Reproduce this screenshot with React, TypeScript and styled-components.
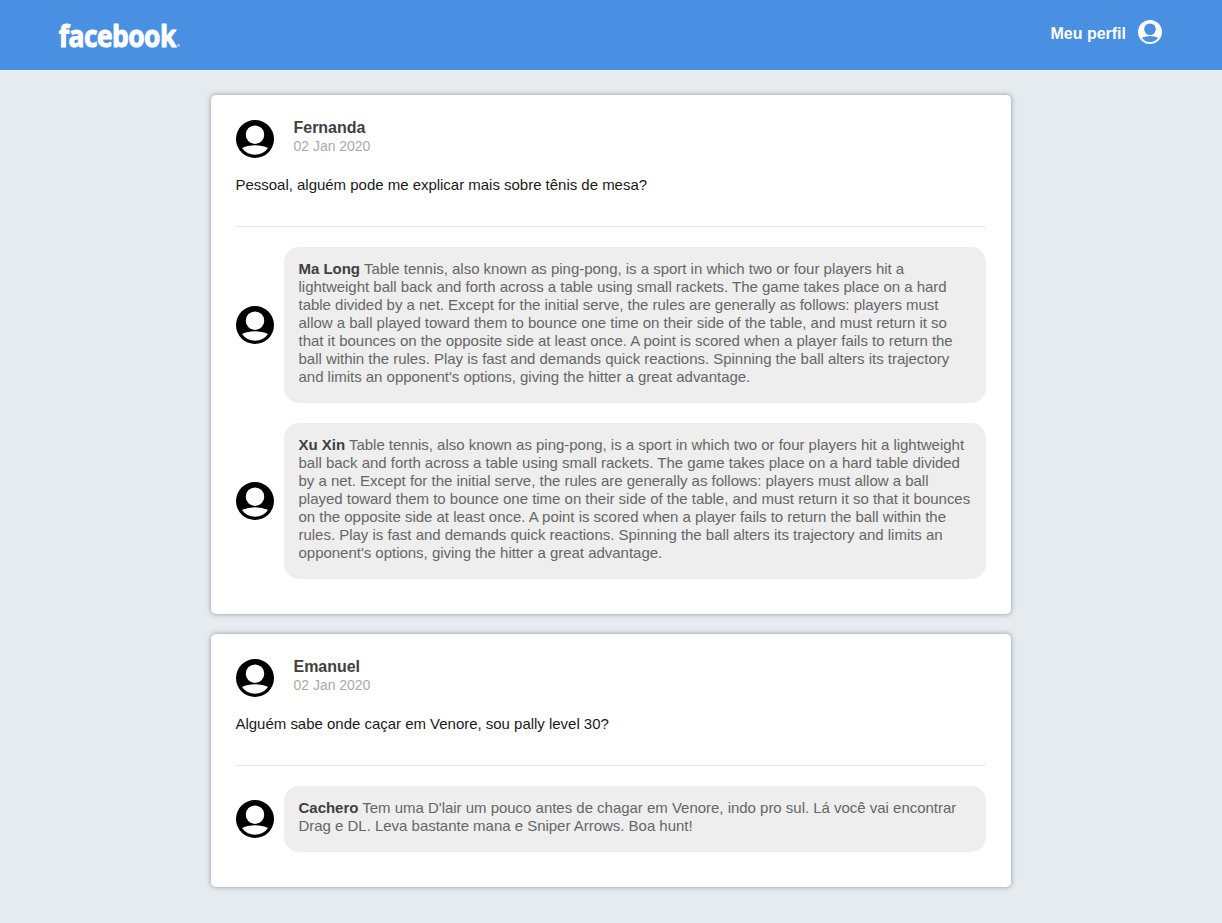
import React from "react";
import styled, { createGlobalStyle } from "styled-components";

const GlobalStyle = createGlobalStyle`
  * {
    margin: 0;
    padding: 0;
    box-sizing: border-box;
  }
  body {
    background: #e5ebef;
    font-family: "Liberation Sans", Helvetica, Arial, sans-serif;
    font-size: 15px;
    letter-spacing: -0.02px;
    -webkit-font-smoothing: antialiased;
  }
`;

const Header = styled.header`
  display: flex;
  align-items: flex-start;
  justify-content: space-between;
  height: 70px;
  padding: 20px 60px 0 55px;
  background: #4a90e2;
`;

const Logo = styled.svg`
  display: block;
  width: 130px;
  height: 32px;
  overflow: visible;
  letter-spacing: -0.6px;
`;

const Profile = styled.a`
  display: flex;
  align-items: flex-start;
  gap: 12px;
  color: #fff;
  font-size: 16px;
  font-weight: bold;
  line-height: 28px;
  letter-spacing: 0;
`;

const Icon = styled.svg<{ $size: number }>`
  display: block;
  flex: none;
  width: ${({ $size }) => $size}px;
  height: ${({ $size }) => $size}px;
`;

const Feed = styled.main`
  display: flex;
  flex-direction: column;
  gap: 20px;
  width: 800px;
  margin: 25px auto;
`;

const Card = styled.article`
  padding: 25px 25px 35px;
  background: #fff;
  border-radius: 5px;
  box-shadow: 0 0 5px rgba(50, 70, 80, 0.5);
`;

const CardHeader = styled.div`
  display: flex;
  gap: 19.5px;
  height: 38px;
`;

const Author = styled.div`
  display: flex;
  flex-direction: column;
  margin-top: -1px;
`;

const AuthorName = styled.strong`
  color: #404040;
  font-size: 16px;
  line-height: 18px;
`;

const PostDate = styled.span`
  color: #aaa;
  font-size: 14px;
  line-height: 18px;
`;

const Content = styled.p`
  margin: 18px 0 0 -0.5px;
  color: #1a1a1a;
  line-height: 18px;
`;

const Divider = styled.hr`
  height: 1px;
  margin: 32px 0 20px;
  border: 0;
  background: #e6e6e6;
`;

const Comments = styled.div`
  display: flex;
  flex-direction: column;
  gap: 20px;
`;

const CommentRow = styled.div`
  display: flex;
  align-items: center;
  gap: 10px;
`;

const Bubble = styled.p`
  flex: 1;
  padding: 13px 14px 17px 14.5px;
  border-radius: 15px;
  background: #eee;
  color: #666;
  line-height: 18px;

  strong {
    color: #404040;
  }
`;

const Avatar = ({ size = 38, fill = "#000" }: { size?: number; fill?: string }) => (
  <Icon $size={size} viewBox="0 0 38 38" aria-hidden="true">
    <path
      fill={fill}
      fillRule="evenodd"
      d="M19 0a19 19 0 1 1 0 38a19 19 0 0 1 0-38zM19 5.4a9.25 9.25 0 1 0 0 18.5a9.25 9.25 0 0 0 0-18.5zM6 28.1Q11.5 25.3 19 25.3T32 28.1Q27.5 34.7 19 34.7T6 28.1z"
    />
  </Icon>
);

const tableTennis =
  "Table tennis, also known as ping-pong, is a sport in which two or four players hit a lightweight ball back and forth across a table using small rackets. The game takes place on a hard table divided by a net. Except for the initial serve, the rules are generally as follows: players must allow a ball played toward them to bounce one time on their side of the table, and must return it so that it bounces on the opposite side at least once. A point is scored when a player fails to return the ball within the rules. Play is fast and demands quick reactions. Spinning the ball alters its trajectory and limits an opponent's options, giving the hitter a great advantage.";

const posts = [
  {
    author: "Fernanda",
    date: "02 Jan 2020",
    content: "Pessoal, alguém pode me explicar mais sobre tênis de mesa?",
    comments: [
      { author: "Ma Long", text: tableTennis },
      { author: "Xu Xin", text: tableTennis },
    ],
  },
  {
    author: "Emanuel",
    date: "02 Jan 2020",
    content: "Alguém sabe onde caçar em Venore, sou pally level 30?",
    comments: [
      {
        author: "Cachero",
        text: "Tem uma D'lair um pouco antes de chagar em Venore, indo pro sul. Lá você vai encontrar Drag e DL. Leva bastante mana e Sniper Arrows. Boa hunt!",
      },
    ],
  },
];

export default function App() {
  return (
    <>
      <GlobalStyle />
      <Header>
        <Logo viewBox="0 0 130 32" aria-label="facebook">
          <text
            x="3.8"
            y="26.6"
            fill="#fff"
            stroke="#fff"
            strokeWidth="1"
            strokeLinejoin="round"
            fontFamily="'Open Sans', sans-serif"
            fontWeight="700"
            fontSize="29.5"
            textLength="117"
            lengthAdjust="spacingAndGlyphs"
          >
            facebook
          </text>
          <circle cx="123.6" cy="25.3" r="1.2" fill="#fff" opacity="0.6" />
        </Logo>
        <Profile>
          Meu perfil
          <Avatar size={24} fill="#fff" />
        </Profile>
      </Header>
      <Feed>
        {posts.map((post) => (
          <Card key={post.author}>
            <CardHeader>
              <Avatar />
              <Author>
                <AuthorName>{post.author}</AuthorName>
                <PostDate>{post.date}</PostDate>
              </Author>
            </CardHeader>
            <Content>{post.content}</Content>
            <Divider />
            <Comments>
              {post.comments.map((comment) => (
                <CommentRow key={comment.author}>
                  <Avatar />
                  <Bubble>
                    <strong>{comment.author}</strong> {comment.text}
                  </Bubble>
                </CommentRow>
              ))}
            </Comments>
          </Card>
        ))}
      </Feed>
    </>
  );
}
